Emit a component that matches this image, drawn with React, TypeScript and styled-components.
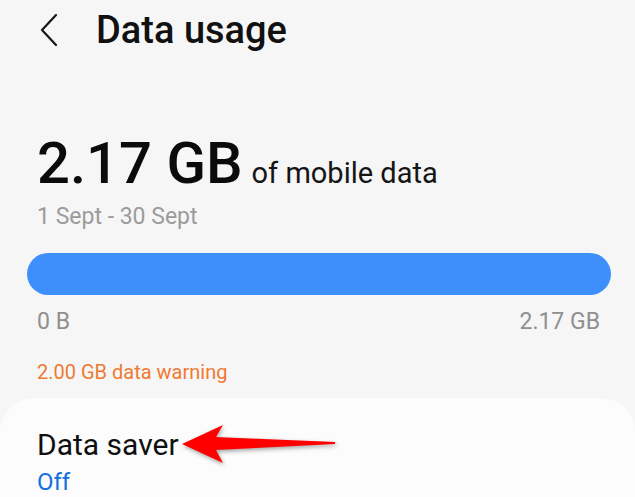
import React from "react";
import styled, { createGlobalStyle } from "styled-components";

const GlobalStyle = createGlobalStyle`
  html, body {
    margin: 0;
    padding: 0;
    background: #f6f6f6;
  }
  body {
    font-family: Roboto, "Noto Sans", "Liberation Sans", sans-serif;
    color: #111;
    overflow: hidden;
  }
`;

const Screen = styled.div`
  width: 635px;
  height: 497px;
  display: flex;
  flex-direction: column;
  background: #f6f6f6;
  overflow: hidden;
`;

const Header = styled.header`
  display: flex;
  align-items: center;
  gap: 36px;
  padding: 6px 0 0 38px;
  height: 48px;
  flex: none;
`;

const BackButton = styled.button`
  border: 0;
  background: transparent;
  padding: 0;
  width: 22px;
  height: 36px;
  display: flex;
  align-items: center;
  justify-content: center;
  color: #111;
`;

const Title = styled.h1`
  margin: 0;
  font-size: 38px;
  line-height: 48px;
  font-weight: 500;
  color: #111;
`;

const Summary = styled.section`
  display: flex;
  flex-direction: column;
  padding: 0 24px 0 27px;
  flex: none;
`;

const TotalRow = styled.div`
  display: flex;
  align-items: baseline;
  gap: 9px;
  height: 64px;
  margin-top: 77px;
  padding-left: 10px;
`;

const Total = styled.span`
  font-size: 58px;
  line-height: 64px;
  font-weight: 500;
  color: #0b0b0b;
`;

const TotalSuffix = styled.span`
  font-size: 29px;
  line-height: 32px;
  color: #151515;
`;

const Period = styled.div`
  margin-top: 8px;
  padding-left: 10px;
  font-size: 23px;
  line-height: 28px;
  color: #9b9b9b;
`;

const Bar = styled.div`
  margin-top: 22px;
  height: 42px;
  border-radius: 21px;
  background: #3e8ffc;
`;

const Scale = styled.div`
  display: flex;
  justify-content: space-between;
  margin-top: 13px;
  padding: 0 11px 0 10px;
  font-size: 23px;
  line-height: 28px;
  color: #8f8f8f;
`;

const Warning = styled.div`
  margin-top: 24px;
  padding-left: 10px;
  font-size: 20px;
  line-height: 24px;
  color: #ef7a30;
`;

const Card = styled.section`
  margin-top: 14px;
  flex: 1;
  background: #fcfcfc;
  border-radius: 34px 34px 0 0;
  padding: 30px 0 0 37px;
  display: flex;
  flex-direction: column;
  gap: 6px;
`;

const ItemTitleRow = styled.div`
  display: flex;
  align-items: center;
  height: 34px;
`;

const ItemTitle = styled.span`
  font-size: 30px;
  line-height: 34px;
  color: #0f0f0f;
`;

const ItemValue = styled.span`
  font-size: 24px;
  line-height: 28px;
  color: #1470e0;
`;

const Arrow = styled.svg`
  margin-left: 0;
  flex: none;
  overflow: visible;
  filter: drop-shadow(1px 2px 2px rgba(0, 0, 0, 0.35));
`;

export default function App() {
  return (
    <>
      <GlobalStyle />
      <Screen>
        <Header>
          <BackButton aria-label="Back">
            <svg width="20" height="34" viewBox="0 0 20 34" fill="none">
              <path d="M17 2 L3 17 L17 32" stroke="#151515" strokeWidth="2.2" strokeLinecap="round" strokeLinejoin="round" />
            </svg>
          </BackButton>
          <Title>Data usage</Title>
        </Header>
        <Summary>
          <TotalRow>
            <Total>2.17 GB</Total>
            <TotalSuffix>of mobile data</TotalSuffix>
          </TotalRow>
          <Period>1 Sept - 30 Sept</Period>
          <Bar />
          <Scale>
            <span>0 B</span>
            <span>2.17 GB</span>
          </Scale>
          <Warning>2.00 GB data warning</Warning>
        </Summary>
        <Card>
          <ItemTitleRow>
            <ItemTitle>Data saver</ItemTitle>
            <Arrow width="160" height="46" viewBox="0 0 160 46">
              <path d="M3 22 L44 3 L37 15 L156 20 L156 22 L37 28 L44 41 Z" fill="#ff0000" />
            </Arrow>
          </ItemTitleRow>
          <ItemValue>Off</ItemValue>
        </Card>
      </Screen>
    </>
  );
}
